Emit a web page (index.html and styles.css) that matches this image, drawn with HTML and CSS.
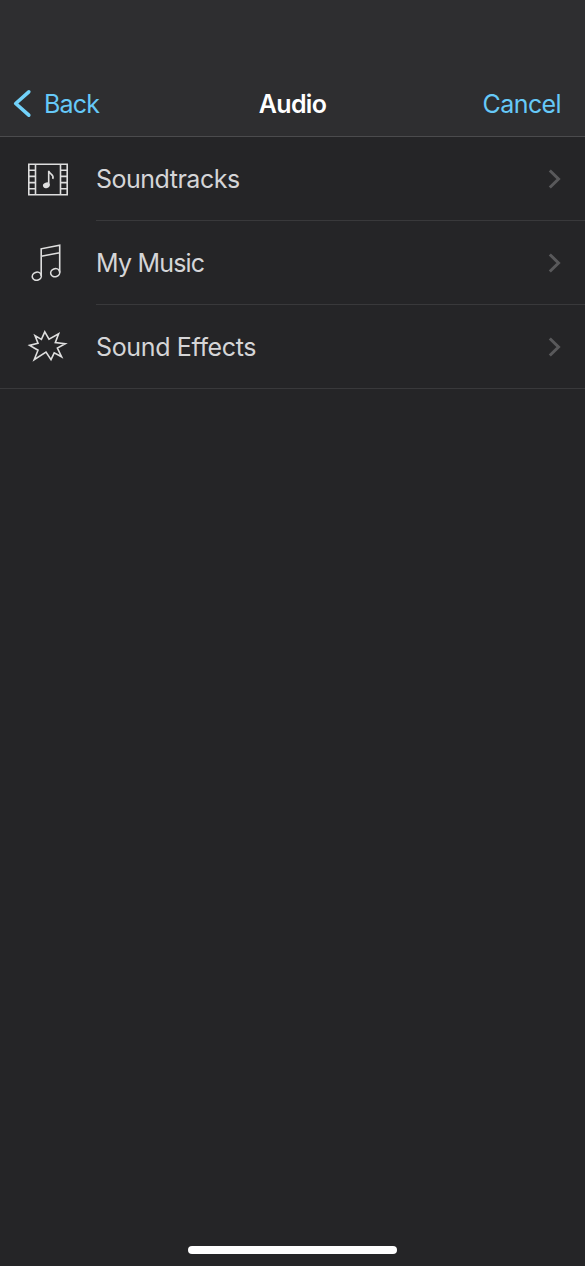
FILE: index.html
```html
<!DOCTYPE html>
<html lang="en">
<head>
<meta charset="utf-8">
<title>Audio</title>
<link rel="stylesheet" href="styles.css">
</head>
<body>
<div class="screen">
  <header class="navbar">
    <a class="back">
      <svg class="back-icon" width="20" height="30" viewBox="0 0 20 30"><path d="M16.8 2.8L3.7 14.5L16.8 26.2"/></svg>
      <span class="back-label">Back</span>
    </a>
    <h1 class="title">Audio</h1>
    <a class="cancel">Cancel</a>
  </header>
  <main class="list">
    <div class="row">
      <svg class="icon" width="56" height="48" viewBox="0 0 56 48">
        <path d="M8.8 9.2H47.2V39.8H8.8ZM15.5 9.2V39.8M40.5 9.2V39.8M8.8 15.3H15.5M8.8 21.4H15.5M8.8 27.6H15.5M8.8 33.7H15.5M40.5 15.3H47.2M40.5 21.4H47.2M40.5 27.6H47.2M40.5 33.7H47.2"/>
        <path d="M28.7 30V15.8C29.5 19.5 34.8 19.5 32.7 23.8"/>
        <ellipse class="note-head" cx="26.4" cy="30.3" rx="3.5" ry="2.8" transform="rotate(-20 26.4 30.3)"/>
      </svg>
      <div class="cell"><span class="name soundtracks">Soundtracks</span><svg class="chevron" width="14" height="22" viewBox="0 0 14 22"><path d="M1.8 2.5L10.5 11L1.8 19.5"/></svg></div>
    </div>
    <div class="row">
      <svg class="icon" width="56" height="48" viewBox="0 0 56 48">
        <path d="M21.2 37V9.8L39.7 6.2V33.5M21.2 17.2L39.7 13.7"/>
        <ellipse cx="16.8" cy="37.2" rx="4.6" ry="4" transform="rotate(-20 16.8 37.2)"/>
        <ellipse cx="35.2" cy="33.7" rx="4.6" ry="4" transform="rotate(-20 35.2 33.7)"/>
      </svg>
      <div class="cell"><span class="name music">My Music</span><svg class="chevron" width="14" height="22" viewBox="0 0 14 22"><path d="M1.8 2.5L10.5 11L1.8 19.5"/></svg></div>
    </div>
    <div class="row">
      <svg class="icon" width="56" height="48" viewBox="0 0 56 48">
        <path d="M24.8 8.8L29 16.2L38.6 10.8L35.3 19.6L45.2 20.8L37.4 25L41.6 33.8L34.2 29.8L31 36.6L26 29L14.2 36.6L18 27.2L9.6 22.4L18 20.2L15 12.6L21.4 16.4Z"/>
      </svg>
      <div class="cell"><span class="name effects">Sound Effects</span><svg class="chevron" width="14" height="22" viewBox="0 0 14 22"><path d="M1.8 2.5L10.5 11L1.8 19.5"/></svg></div>
    </div>
  </main>
  <div class="home-indicator"></div>
</div>
</body>
</html>
```
FILE: styles.css
```css
* { box-sizing: border-box; }
body {
  margin: 0;
  background: #252527;
  font-family: Inter, "Liberation Sans", sans-serif;
  font-size: 25px;
  line-height: 30px;
}
.screen {
  display: flex;
  flex-direction: column;
  height: 1266px;
}
.navbar {
  display: grid;
  grid-template-columns: 1fr auto 1fr;
  align-items: center;
  height: 137px;
  padding: 71px 24px 0 12px;
  background: #2e2e30;
  border-bottom: 1px solid #4b4b4d;
  color: #66c9f8;
}
.back { display: flex; align-items: center; gap: 12px; }
.back-icon { fill: none; stroke: #72d2fa; stroke-width: 3.6; stroke-linecap: round; stroke-linejoin: round; }
.back-label { letter-spacing: -0.8px; }
.title {
  margin: 0 0 0 12px;
  color: #fff;
  font-size: 25px;
  font-weight: 600;
  letter-spacing: -0.7px;
}
.cancel { justify-self: end; letter-spacing: -0.6px; }
.row { display: flex; height: 84px; padding-left: 20px; }
.icon {
  flex: none;
  margin: 18px 20px 0 0;
  fill: none;
  stroke: #dedede;
  stroke-width: 1.6;
  stroke-linejoin: miter;
  stroke-miterlimit: 8;
}
.note-head { fill: #dedede; stroke: none; }
.cell {
  display: flex;
  flex: 1;
  align-items: center;
  justify-content: space-between;
  padding-right: 23px;
  border-bottom: 1px solid #39393b;
}
.row:last-child { border-bottom: 1px solid #39393b; }
.row:last-child .cell { padding-top: 1px; border-bottom: 0; }
.name { color: #d5d5d7; font-weight: 400; }
.soundtracks { letter-spacing: -0.5px; }
.music { letter-spacing: -0.8px; }
.effects { letter-spacing: -0.35px; font-variant-ligatures: none; }
.chevron { fill: none; stroke: #59595b; stroke-width: 3; }
.home-indicator {
  width: 209px;
  height: 8px;
  margin: auto auto 12px 188px;
  border-radius: 4px;
  background: #fff;
}
```
